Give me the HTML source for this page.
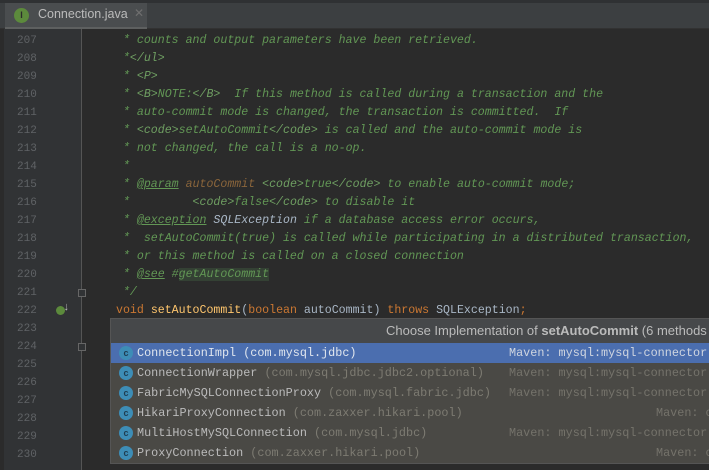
<!DOCTYPE html>
<html><head><meta charset="utf-8"><style>
*{margin:0;padding:0;box-sizing:border-box}
body{width:709px;height:470px;overflow:hidden;background:#2b2b2b;position:relative;font-family:"Liberation Mono","DejaVu Sans Mono",monospace}
.top{position:absolute;left:0;top:0;width:709px;height:3px;background:#2f3133}
.tabbar{position:absolute;left:0;top:3px;width:709px;height:26px;background:#3c3f41;border-bottom:1px solid #323232}
.tab{position:absolute;left:5px;top:0;width:142px;height:26px;background:#4a4d4f;border-bottom:2px solid #5e6060}
.tab .ic{position:absolute;left:9px;top:5px;width:15px;height:15px;border-radius:50%;background:#5c8a3c;color:#2b2b2b;font:bold 9px "Liberation Sans",sans-serif;text-align:center;line-height:15px}
.tab .t{position:absolute;left:33px;top:4px;font:12.5px "Liberation Sans",sans-serif;color:#bbbbbb}
.tab .x{position:absolute;left:129px;top:3px;font:12px "Liberation Sans",sans-serif;color:#6f6f6f}
.gut{position:absolute;left:4px;top:29px;width:78px;height:441px;background:#313335;border-right:1px solid #555}
.ln{position:absolute;left:17px;font-size:11px;color:#606366;line-height:18px}
.cl{position:absolute;left:116px;font-size:11.6px;line-height:18px;white-space:pre;color:#a9b7c6}
.c{color:#629755;font-style:italic}
.tg{color:#6f9f62;font-style:italic}
.u{text-decoration:underline;color:#629755;font-style:italic}
.p{color:#8a653b;font-style:italic}
.k{color:#cc7832}
.m{color:#ffc66d}
.hl{background:#344134}
.pop{position:absolute;left:110px;top:318px;width:599px;height:146px;background:#4a4945;border:1px solid #555;border-right:none;overflow:hidden}
.ph{height:24px;background:#46484a;font:13px "Liberation Sans",sans-serif;color:#bbbbbb;padding-left:275px;line-height:24px;white-space:nowrap}
.row{position:relative;height:20px;font-size:11.8px;line-height:20px;white-space:pre;color:#bbbbbb}
.row.s{background:#4b6eaf;color:#e0e6ee}
.row .ci{position:absolute;left:8px;top:3px;width:14px;height:14px;border-radius:50%;background:#3d8db6;color:#1e3c50;font:bold 9px "Liberation Sans",sans-serif;text-align:center;line-height:14px}
.row .n{position:absolute;left:26px}
.g{color:#7d7b72}
.s .g{color:#e0e6ee}
.row .mv{position:absolute;left:398px;color:#75736b}
.row.s .mv{color:#d0d6e0}
.fold{position:absolute;left:78px;width:8px;height:8px;border:1px solid #666;background:#313335}
</style></head><body>
<div class="top"></div>
<div class="tabbar"><div class="tab"><div class="ic">I</div><div class="t">Connection.java</div><div class="x">✕</div></div></div>
<div class="gut"></div>
<div class="ln" style="top:32px">207</div>
<div class="ln" style="top:50px">208</div>
<div class="ln" style="top:68px">209</div>
<div class="ln" style="top:86px">210</div>
<div class="ln" style="top:104px">211</div>
<div class="ln" style="top:122px">212</div>
<div class="ln" style="top:140px">213</div>
<div class="ln" style="top:158px">214</div>
<div class="ln" style="top:176px">215</div>
<div class="ln" style="top:194px">216</div>
<div class="ln" style="top:212px">217</div>
<div class="ln" style="top:230px">218</div>
<div class="ln" style="top:248px">219</div>
<div class="ln" style="top:266px">220</div>
<div class="ln" style="top:284px">221</div>
<div class="ln" style="top:302px">222</div>
<div class="ln" style="top:320px">223</div>
<div class="ln" style="top:338px">224</div>
<div class="ln" style="top:356px">225</div>
<div class="ln" style="top:374px">226</div>
<div class="ln" style="top:392px">227</div>
<div class="ln" style="top:410px">228</div>
<div class="ln" style="top:428px">229</div>
<div class="ln" style="top:446px">230</div>
<div class="fold" style="top:289px"></div>
<div class="fold" style="top:343px"></div>
<div style="position:absolute;left:56px;top:306px;width:9px;height:9px;border-radius:50%;background:#5c8a3c"></div>
<div style="position:absolute;left:63px;top:302px;color:#bbb;font-size:11px">↓</div>
<div class="cl c" style="top:32px"> * counts and output parameters have been retrieved.</div>
<div class="cl c" style="top:50px"> *<span class="tg">&lt;/ul&gt;</span></div>
<div class="cl c" style="top:68px"> * <span class="tg">&lt;P&gt;</span></div>
<div class="cl c" style="top:86px"> * <span class="tg">&lt;B&gt;</span>NOTE:<span class="tg">&lt;/B&gt;</span>  If this method is called during a transaction and the</div>
<div class="cl c" style="top:104px"> * auto-commit mode is changed, the transaction is committed.  If</div>
<div class="cl c" style="top:122px"> * <span class="tg">&lt;code&gt;</span>setAutoCommit<span class="tg">&lt;/code&gt;</span> is called and the auto-commit mode is</div>
<div class="cl c" style="top:140px"> * not changed, the call is a no-op.</div>
<div class="cl c" style="top:158px"> *</div>
<div class="cl c" style="top:176px"> * <span class="u">@param</span> <span class="p">autoCommit</span> <span class="tg">&lt;code&gt;</span>true<span class="tg">&lt;/code&gt;</span> to enable auto-commit mode;</div>
<div class="cl c" style="top:194px"> *         <span class="tg">&lt;code&gt;</span>false<span class="tg">&lt;/code&gt;</span> to disable it</div>
<div class="cl c" style="top:212px"> * <span class="u">@exception</span> <span style="color:#a9b7c6">SQLException</span> if a database access error occurs,</div>
<div class="cl c" style="top:230px"> *  setAutoCommit(true) is called while participating in a distributed transaction,</div>
<div class="cl c" style="top:248px"> * or this method is called on a closed connection</div>
<div class="cl c" style="top:266px"> * <span class="u">@see</span> #<span class="hl">getAutoCommit</span></div>
<div class="cl c" style="top:284px"> */</div>
<div class="cl" style="top:302px"><span class="k">void</span> <span class="m">setAutoCommit</span>(<span class="k">boolean</span> autoCommit) <span class="k">throws</span> SQLException<span class="k">;</span></div>
<div class="pop">
<div class="ph">Choose Implementation of <b>setAutoCommit</b> (6 methods found)</div>
<div class="row s"><div class="ci">c</div><span class="n">ConnectionImpl <span class="g">(com.mysql.jdbc)</span></span><span class="mv">Maven: mysql:mysql-connector-java</span></div>
<div class="row"><div class="ci">c</div><span class="n">ConnectionWrapper <span class="g">(com.mysql.jdbc.jdbc2.optional)</span></span><span class="mv">Maven: mysql:mysql-connector-java</span></div>
<div class="row"><div class="ci">c</div><span class="n">FabricMySQLConnectionProxy <span class="g">(com.mysql.fabric.jdbc)</span></span><span class="mv">Maven: mysql:mysql-connector-java</span></div>
<div class="row"><div class="ci">c</div><span class="n">HikariProxyConnection <span class="g">(com.zaxxer.hikari.pool)</span></span><span class="mv" style="left:545px">Maven: com</span></div>
<div class="row"><div class="ci">c</div><span class="n">MultiHostMySQLConnection <span class="g">(com.mysql.jdbc)</span></span><span class="mv">Maven: mysql:mysql-connector-java</span></div>
<div class="row"><div class="ci">c</div><span class="n">ProxyConnection <span class="g">(com.zaxxer.hikari.pool)</span></span><span class="mv" style="left:545px">Maven: com</span></div>
</div>
</body></html>
